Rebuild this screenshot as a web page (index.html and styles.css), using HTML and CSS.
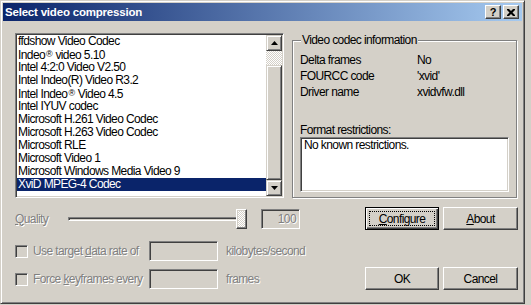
FILE: index.html
```html
<!DOCTYPE html>
<html lang="en">
<head>
    <meta charset="UTF-8">
    <meta name="viewport" content="width=device-width, initial-scale=1.0">
    <title>Select video compression</title>
    <link rel="stylesheet" href="styles.css">
</head>
<body>

    <div class="window">
        <div class="titlebar">
            <span class="title">Select video compression</span>
            <div class="caption-buttons">
                <span class="cap-btn help">?</span>
                <span class="cap-btn close">
                    <svg width="8" height="7" viewBox="0 0 8 7"><path d="M0 0h2l2 2 2-2h2v1l-2.5 2.5 2.5 2.5v1h-2l-2-2-2 2h-2v-1l2.5-2.5-2.5-2.5z" fill="#000"/></svg>
                </span>
            </div>
        </div>

        <div class="client">
            <div class="top-row">
                <div class="listbox">
                    <ul class="items">
                        <li>ffdshow Video Codec</li>
                        <li>Indeo<span class="reg">®</span> video 5.10</li>
                        <li>Intel 4:2:0 Video V2.50</li>
                        <li>Intel Indeo(R) Video R3.2</li>
                        <li>Intel Indeo<span class="reg">®</span> Video 4.5</li>
                        <li>Intel IYUV codec</li>
                        <li>Microsoft H.261 Video Codec</li>
                        <li>Microsoft H.263 Video Codec</li>
                        <li>Microsoft RLE</li>
                        <li>Microsoft Video 1</li>
                        <li>Microsoft Windows Media Video 9</li>
                        <li class="selected">XviD MPEG-4 Codec</li>
                    </ul>
                    <div class="scrollbar">
                        <div class="sb-btn">
                            <svg width="7" height="4" viewBox="0 0 7 4"><path d="M3.5 0L7 4H0z" fill="#000"/></svg>
                        </div>
                        <div class="sb-track"></div>
                        <div class="sb-thumb"></div>
                        <div class="sb-btn">
                            <svg width="7" height="4" viewBox="0 0 7 4"><path d="M0 0h7L3.5 4z" fill="#000"/></svg>
                        </div>
                    </div>
                </div>

                <div class="groupbox">
                    <span class="legend">Video codec information</span>
                    <div class="info-row"><span class="info-label">Delta frames</span><span>No</span></div>
                    <div class="info-row"><span class="info-label">FOURCC code</span><span>'xvid'</span></div>
                    <div class="info-row"><span class="info-label">Driver name</span><span>xvidvfw.dll</span></div>
                    <div class="restrict-label">Format restrictions:</div>
                    <div class="restrict-box">No known restrictions.</div>
                </div>
            </div>

            <div class="quality-row">
                <span class="quality-label disabled"><u>Q</u>uality</span>
                <div class="slider">
                    <div class="slider-track"></div>
                    <div class="slider-thumb"></div>
                </div>
                <div class="edit quality-edit disabled">100</div>
                <div class="btn btn-default configure"><span class="focus"><u>C</u>onfigure</span></div>
                <div class="btn about"><u>A</u>bout</div>
            </div>

            <div class="bottom">
                <div class="options">
                    <div class="option-row">
                        <span class="checkbox"></span>
                        <span class="option-label disabled">Use target <u>d</u>ata rate of</span>
                        <div class="edit option-edit"></div>
                        <span class="unit disabled">kilobytes/second</span>
                    </div>
                    <div class="option-row">
                        <span class="checkbox"></span>
                        <span class="option-label disabled">Force <u>k</u>eyframes every</span>
                        <div class="edit option-edit"></div>
                        <span class="unit disabled">frames</span>
                    </div>
                </div>
                <div class="dialog-buttons">
                    <div class="btn ok">OK</div>
                    <div class="btn cancel">Cancel</div>
                </div>
            </div>
        </div>
    </div>

</body>
</html>
```

FILE: styles.css
```css
body {
    margin: 0;
    background-color: #d4d0c8;
    font-family: 'Liberation Sans', Arial, sans-serif;
    font-size: 12px;
    letter-spacing: -0.6px;
    color: #000;
}

.window {
    box-sizing: border-box;
    width: 525px;
    height: 304px;
    border: 1px solid;
    border-color: #d4d0c8 #404040 #404040 #d4d0c8;
    box-shadow: inset 1px 1px #fff, inset -1px -1px #808080;
    padding: 2px;
    display: flex;
    flex-direction: column;
}

/* title bar */
.titlebar {
    height: 18px;
    flex-shrink: 0;
    display: flex;
    align-items: center;
    justify-content: space-between;
    padding: 0 3px 0 2px;
    background: linear-gradient(to right, #0a246a, #a6caf0);
}

.title {
    color: #fff;
    font-weight: bold;
    font-size: 11.5px;
    letter-spacing: -0.2px;
    line-height: 14px;
}

.caption-buttons {
    display: flex;
    gap: 2px;
}

.cap-btn {
    box-sizing: border-box;
    width: 16px;
    height: 14px;
    display: flex;
    align-items: center;
    justify-content: center;
    background-color: #d4d0c8;
    border: 1px solid;
    border-color: #fff #404040 #404040 #fff;
    box-shadow: inset -1px -1px #808080;
}

.help {
    font-weight: bold;
    font-size: 11px;
    letter-spacing: 0;
    line-height: 11px;
}

/* client area */
.client {
    padding: 12px 0 0 12px;
}

.top-row {
    display: flex;
    align-items: flex-start;
}

.listbox {
    box-sizing: border-box;
    width: 269px;
    height: 165px;
    display: flex;
    border: 1px solid;
    border-color: #808080 #fff #fff #808080;
    padding: 1px;
    box-shadow: inset 1px 1px #404040, inset -1px -1px #d4d0c8;
    background-color: #fff;
}

.items {
    flex: 1;
    margin: 0;
    padding: 0;
    list-style: none;
}

.items li {
    height: 13px;
    line-height: 13px;
    padding-left: 1px;
    white-space: nowrap;
}

.items li.selected {
    background-color: #0a246a;
    color: #fff;
}

.reg {
    font-size: 9px;
    vertical-align: 2px;
    letter-spacing: 0;
    margin-left: 1px;
}

.scrollbar {
    width: 16px;
    display: flex;
    flex-direction: column;
}

.sb-btn,
.sb-thumb {
    box-sizing: border-box;
    border: 1px solid;
    border-color: #d4d0c8 #404040 #404040 #d4d0c8;
    box-shadow: inset 1px 1px #fff, inset -1px -1px #808080;
    background-color: #d4d0c8;
}

.sb-btn {
    height: 16px;
    display: flex;
    align-items: center;
    justify-content: center;
}

.sb-track {
    height: 14px;
    background: repeating-conic-gradient(#d4d0c8 0 25%, #fff 0 50%) 0 0 / 2px 2px;
}

.sb-thumb {
    height: 115px;
}

/* group box */
.groupbox {
    box-sizing: border-box;
    position: relative;
    width: 225px;
    height: 158px;
    margin: 7px 0 0 8px;
    padding: 11px 0 0 7px;
    border: 1px solid #808080;
    box-shadow: inset 1px 1px #fff, 1px 1px #fff;
}

.legend {
    position: absolute;
    top: -8px;
    left: 8px;
    padding: 0 1px;
    line-height: 14px;
    background-color: #d4d0c8;
}

.info-row {
    display: flex;
    height: 16px;
    line-height: 16px;
}

.info-label {
    width: 117px;
}

.restrict-label {
    margin-top: 24px;
    line-height: 13px;
}

.restrict-box {
    box-sizing: border-box;
    width: 209px;
    height: 55px;
    border: 1px solid;
    border-color: #808080 #fff #fff #808080;
    box-shadow: inset 1px 1px #404040, inset -1px -1px #d4d0c8;
    background-color: #fff;
    padding: 1px 3px;
    line-height: 13px;
}

/* quality row */
.quality-row {
    display: flex;
    align-items: center;
    height: 23px;
    margin-top: 9px;
}

.disabled {
    color: #808080;
    text-shadow: 1px 1px 0 #fff;
}

.quality-label {
    width: 53px;
    line-height: 14px;
}

.slider {
    position: relative;
    width: 180px;
    height: 23px;
    display: flex;
    align-items: center;
}

.slider-track {
    box-sizing: border-box;
    width: 175px;
    height: 4px;
    border: 1px solid;
    border-color: #808080 #fff #fff #808080;
    box-shadow: inset 1px 1px #404040;
    background-color: #d4d0c8;
}

.slider-thumb {
    box-sizing: border-box;
    position: absolute;
    left: 168px;
    top: 2px;
    width: 11px;
    height: 20px;
    border: 1px solid;
    border-color: #fff #404040 #404040 #fff;
    box-shadow: inset -1px -1px #808080, inset 1px 1px #d4d0c8;
    background: repeating-conic-gradient(#d4d0c8 0 25%, #fff 0 50%) 0 0 / 2px 2px;
}

.edit {
    box-sizing: border-box;
    height: 20px;
    border: 1px solid;
    border-color: #808080 #fff #fff #808080;
    box-shadow: inset 1px 1px #404040, inset -1px -1px #d4d0c8;
    background-color: #d4d0c8;
}

.quality-edit {
    width: 39px;
    margin-left: 13px;
    text-align: right;
    padding-right: 3px;
    line-height: 18px;
}

.btn {
    box-sizing: border-box;
    height: 23px;
    display: flex;
    align-items: center;
    justify-content: center;
    border: 1px solid;
    border-color: #fff #404040 #404040 #fff;
    box-shadow: inset -1px -1px #808080, inset 1px 1px #d4d0c8;
    background-color: #d4d0c8;
    line-height: 14px;
}

.btn-default {
    border-color: #000;
    box-shadow: inset 1px 1px #fff, inset -1px -1px #404040, inset -2px -2px #808080;
    padding: 3px;
    align-items: stretch;
}

.focus {
    flex: 1;
    display: flex;
    align-items: center;
    justify-content: center;
    border: 1px dotted #000;
}

.configure {
    width: 74px;
    margin-left: 65px;
}

.about {
    width: 75px;
    margin-left: 4px;
}

/* options + dialog buttons */
.bottom {
    display: flex;
    margin-top: 11px;
}

.options {
    width: 350px;
    display: flex;
    flex-direction: column;
    gap: 8px;
}

.option-row {
    display: flex;
    align-items: center;
    height: 20px;
}

.checkbox {
    box-sizing: border-box;
    width: 13px;
    height: 13px;
    margin-right: 5px;
    border: 1px solid;
    border-color: #808080 #fff #fff #808080;
    box-shadow: inset 1px 1px #404040, inset -1px -1px #d4d0c8;
    background-color: #d4d0c8;
}

.option-label {
    width: 116px;
    line-height: 14px;
    white-space: nowrap;
}

.option-edit {
    width: 69px;
}

.unit {
    margin-left: 8px;
    line-height: 14px;
}

.dialog-buttons {
    display: flex;
    gap: 4px;
    align-self: flex-end;
    margin-bottom: -1px;
}

.ok {
    width: 74px;
}

.cancel {
    width: 75px;
}
```
